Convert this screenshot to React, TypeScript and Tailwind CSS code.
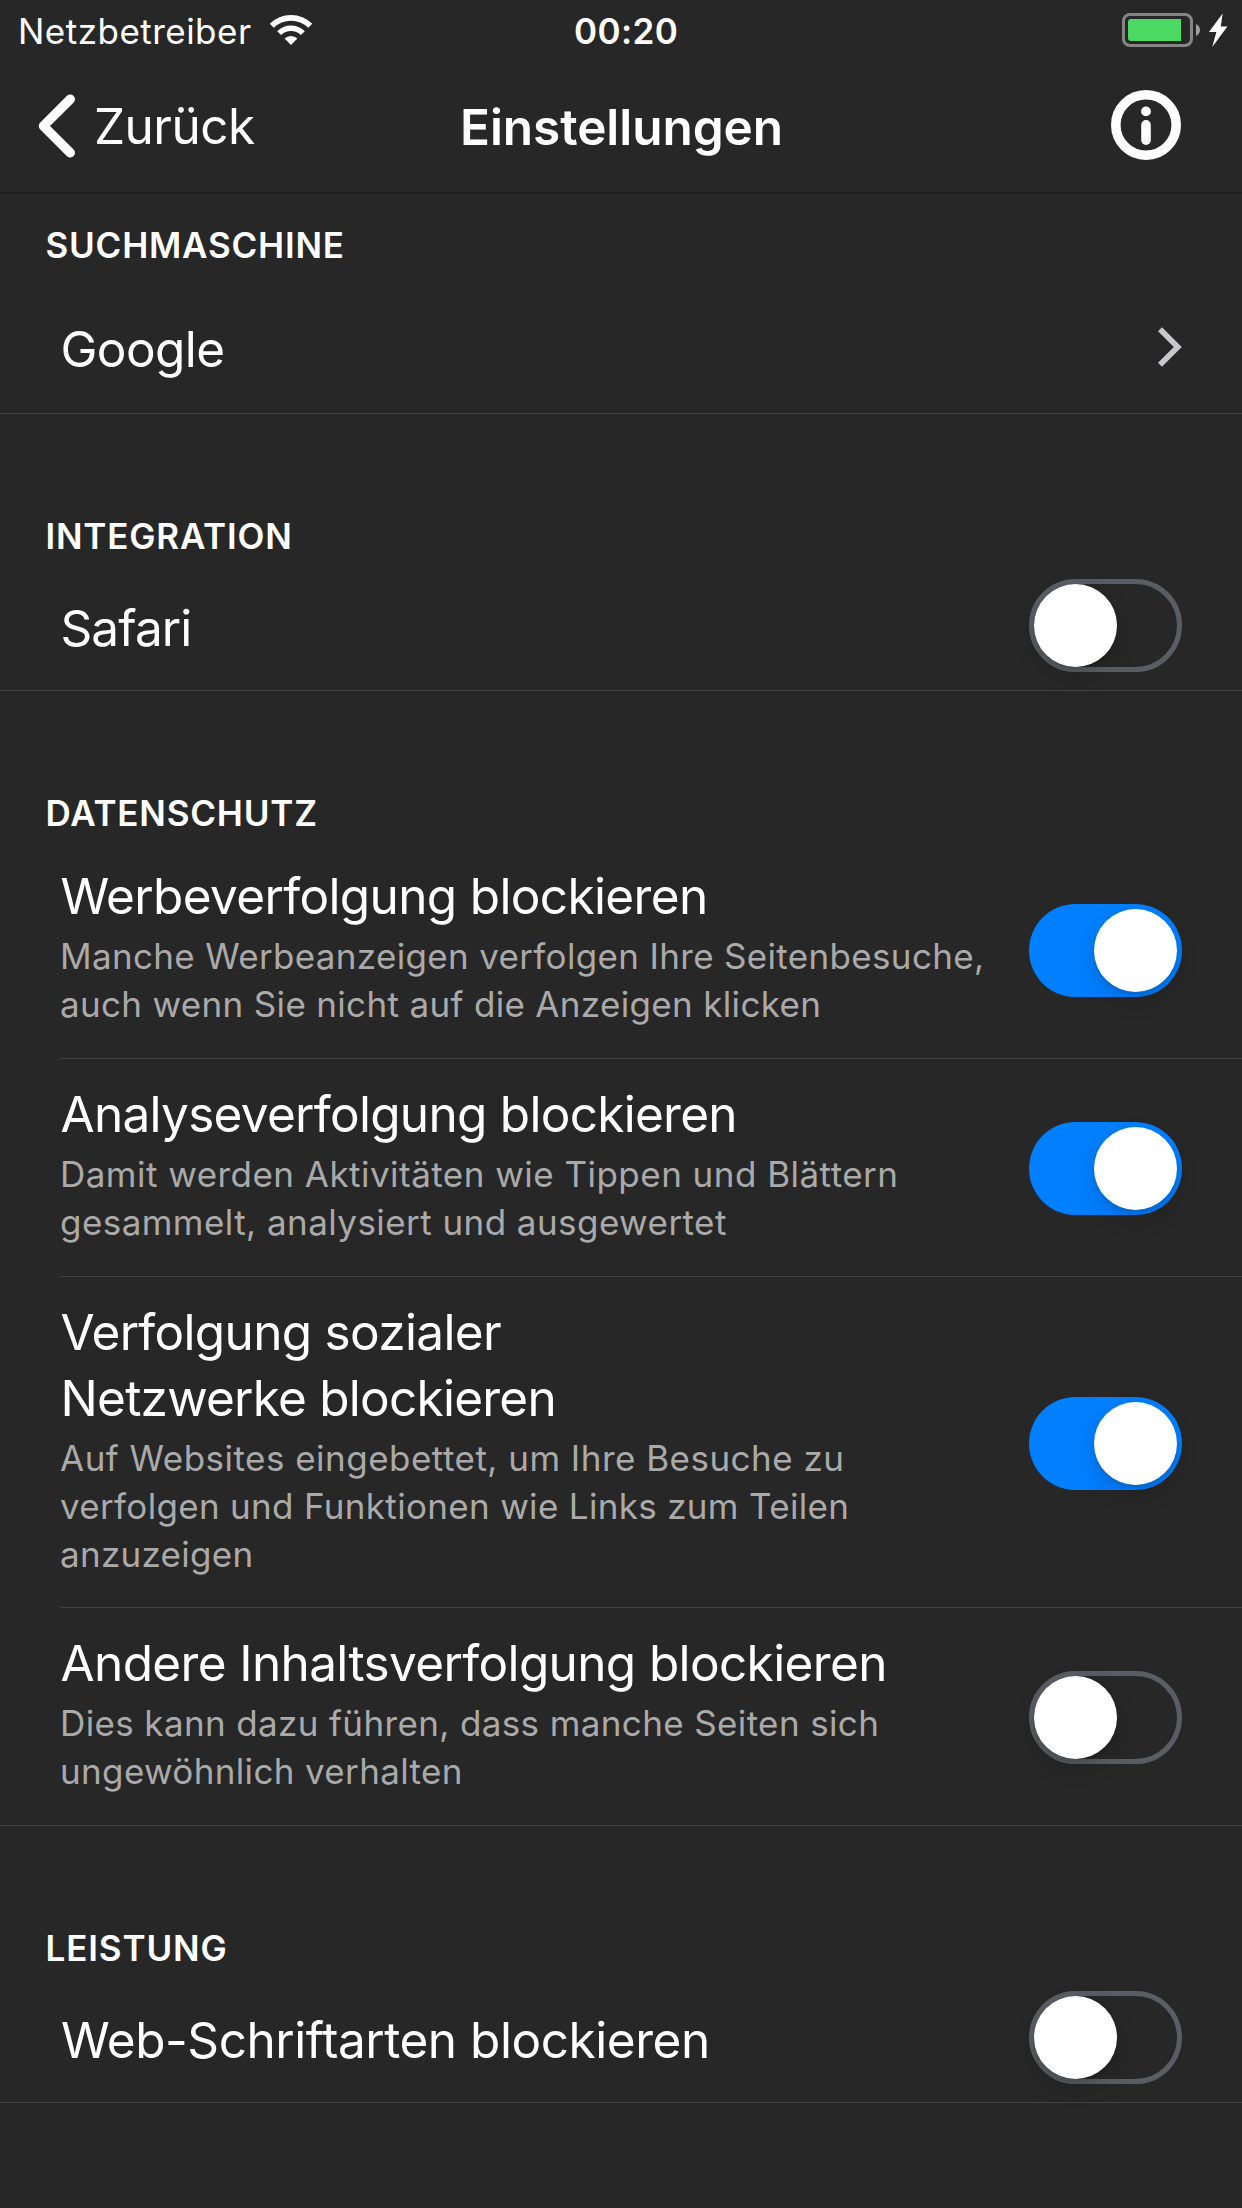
import React from "react";
import clsx from "clsx";

type Line = { text: string; tracking: string };

function StatusBar() {
  return (
    <div className="flex h-[62px] items-center text-[35px] leading-[52px]">
      <div className="flex w-[574px] items-center pl-[18px]">
        <span className="w-[252px] tracking-[0.48px]">Netzbetreiber</span>
        <svg className="-mt-[2px]" width="42" height="30" viewBox="0 0 42 30" fill="#fff">
          <path d="M-.2 8.8A30 30 0 0 1 42.2 8.8L38.2 12.8A24.3 24.3 0 0 0 3.8 12.8Z" />
          <path d="M7.2 16.2A19.5 19.5 0 0 1 34.8 16.2L30.9 20.1A14 14 0 0 0 11.1 20.1Z" />
          <path d="M14.6 23.6A9 9 0 0 1 27.4 23.6L21 30Z" />
        </svg>
      </div>
      <span className="font-semibold tracking-[0.4px]">00:20</span>
      <svg className="-mt-[2px] mr-[14px] ml-auto" width="106" height="34" viewBox="0 0 106 34">
        <rect x="1.5" y="1.5" width="68" height="31" rx="6.5" fill="none" stroke="#858585" strokeWidth="3" />
        <path d="M9 6H59V28H9A3 3 0 0 1 6 25V9A3 3 0 0 1 9 6Z" fill="#4cd964" />
        <path d="M74 11C76.6 12.4 78 14.5 78 17S76.6 21.6 74 23Z" fill="#a0a0a0" />
        <path d="M100.6 .6L98.8 13.6H105.4L90.2 34L94.4 19H87Z" fill="#fff" />
      </svg>
    </div>
  );
}

function NavBar() {
  return (
    <div className="flex h-[131px] items-center border-b border-[#1b1b1b] pb-[2px] text-[49.5px] leading-[66px]">
      <div className="flex w-[460px] items-center pl-[38px]">
        <svg width="37" height="64" viewBox="0 0 37 64" fill="none" stroke="#fff" strokeWidth="9.4" strokeLinecap="round" strokeLinejoin="round">
          <path d="M32.3 5.2L5.4 32L32.3 58.8" />
        </svg>
        <span className="ml-[19px] tracking-[-0.54px]">Zurück</span>
      </div>
      <h1 className="pt-[2px] font-semibold tracking-[-0.05px]">Einstellungen</h1>
      <svg className="-mt-[2px] mr-[61px] ml-auto" width="70" height="70" viewBox="0 0 70 70">
        <circle cx="35" cy="35" r="30.2" fill="none" stroke="#fff" strokeWidth="9.6" />
        <circle cx="35" cy="21.4" r="4.9" fill="#fff" />
        <rect x="30.2" y="30" width="9.6" height="25" rx="4.8" fill="#fff" />
      </svg>
    </div>
  );
}

function Toggle({ on = false, className }: { on?: boolean; className?: string }) {
  return (
    <button
      type="button"
      role="switch"
      aria-checked={on}
      className={clsx(
        "flex h-[93px] w-[153px] shrink-0 items-center rounded-full",
        on ? "justify-end bg-[#007fff] px-[5px]" : "justify-start border-[5px] border-[#595e64]",
        className,
      )}
    >
      <span className="size-[83px] shrink-0 rounded-full bg-white shadow-[0_9px_24px_rgba(0,0,0,0.15),0_3px_4px_rgba(0,0,0,0.1)]" />
    </button>
  );
}

function SectionTitle({ children, className }: { children: string; className: string }) {
  return <h2 className={clsx("pl-[45.5px] text-[35px] leading-[52px] font-semibold", className)}>{children}</h2>;
}

function SimpleRow({ label, labelClass, children }: { label: string; labelClass: string; children: React.ReactNode }) {
  return (
    <div className="flex h-[129px] items-center justify-between border-b border-[#434343] pr-[60px] pl-[60px]">
      <span className={clsx("text-[49.5px] leading-[66px]", labelClass)}>{label}</span>
      {children}
    </div>
  );
}

function DetailRow({ title, details, on, last }: { title: Line[]; details: Line[]; on: boolean; last?: boolean }) {
  return (
    <div className={clsx("border-b border-[#434343]", last ? "pl-[60px]" : "ml-[60px]")}>
      <div className={clsx("flex justify-between pt-[22px] pr-[60px]", title.length > 1 ? "h-[330px]" : "h-[217px]")}>
        <div className="whitespace-nowrap">
          <div className="pl-[0.5px] text-[49.5px] leading-[66px]">
            {title.map((l) => (
              <div key={l.text} className={l.tracking}>{l.text}</div>
            ))}
          </div>
          <div className="pt-[3px] text-[35px] leading-[48px] text-[#aaaaaa]">
            {details.map((l) => (
              <div key={l.text} className={l.tracking}>{l.text}</div>
            ))}
          </div>
        </div>
        <Toggle on={on} className={title.length > 1 ? "mt-[98px]" : "mt-[41px]"} />
      </div>
    </div>
  );
}

const privacy: { title: Line[]; details: Line[]; on: boolean }[] = [
  {
    title: [{ text: "Werbeverfolgung blockieren", tracking: "tracking-[-0.64px]" }],
    details: [
      { text: "Manche Werbeanzeigen verfolgen Ihre Seitenbesuche,", tracking: "tracking-[0.33px]" },
      { text: "auch wenn Sie nicht auf die Anzeigen klicken", tracking: "tracking-[0.33px]" },
    ],
    on: true,
  },
  {
    title: [{ text: "Analyseverfolgung blockieren", tracking: "tracking-[-0.71px]" }],
    details: [
      { text: "Damit werden Aktivitäten wie Tippen und Blättern", tracking: "tracking-[0.47px]" },
      { text: "gesammelt, analysiert und ausgewertet", tracking: "tracking-[0.44px]" },
    ],
    on: true,
  },
  {
    title: [
      { text: "Verfolgung sozialer", tracking: "tracking-[-0.68px]" },
      { text: "Netzwerke blockieren", tracking: "tracking-[-0.76px]" },
    ],
    details: [
      { text: "Auf Websites eingebettet, um Ihre Besuche zu", tracking: "tracking-[0.48px]" },
      { text: "verfolgen und Funktionen wie Links zum Teilen", tracking: "tracking-[0.32px]" },
      { text: "anzuzeigen", tracking: "tracking-[0.28px]" },
    ],
    on: true,
  },
  {
    title: [{ text: "Andere Inhaltsverfolgung blockieren", tracking: "tracking-[-0.63px]" }],
    details: [
      { text: "Dies kann dazu führen, dass manche Seiten sich", tracking: "tracking-[0.37px]" },
      { text: "ungewöhnlich verhalten", tracking: "tracking-[0.35px]" },
    ],
    on: false,
  },
];

export default function App() {
  return (
    <div className="h-[2208px] w-[1242px] overflow-hidden bg-[#272727] font-['Inter',sans-serif] text-white">
      <StatusBar />
      <NavBar />

      <SectionTitle className="h-[92px] pt-[26px] tracking-[0.78px]">SUCHMASCHINE</SectionTitle>
      <SimpleRow label="Google" labelClass="pl-[0.5px] tracking-[-0.6px]">
        <svg className="-mt-[5px]" width="24" height="40" viewBox="0 0 24 40" fill="none" stroke="#c7c7cc" strokeWidth="5.6">
          <path d="M2 2.3L19.8 20L2 37.7" />
        </svg>
      </SimpleRow>

      <SectionTitle className="h-[148px] pt-[96px] tracking-[0.8px]">INTEGRATION</SectionTitle>
      <SimpleRow label="Safari" labelClass="pl-[0.5px] pt-[4px] tracking-[-0.9px]">
        <Toggle className="-mt-px" />
      </SimpleRow>

      <SectionTitle className="h-[150px] pt-[96px] tracking-[0.8px]">DATENSCHUTZ</SectionTitle>
      {privacy.map((row, i) => (
        <DetailRow key={row.title[0].text} {...row} last={i === privacy.length - 1} />
      ))}

      <SectionTitle className="h-[148px] pt-[96px] tracking-[0.88px]">LEISTUNG</SectionTitle>
      <SimpleRow label="Web-Schriftarten blockieren" labelClass="pt-[4px] pl-px tracking-[-0.46px]">
        <Toggle className="-mt-px" />
      </SimpleRow>
    </div>
  );
}
